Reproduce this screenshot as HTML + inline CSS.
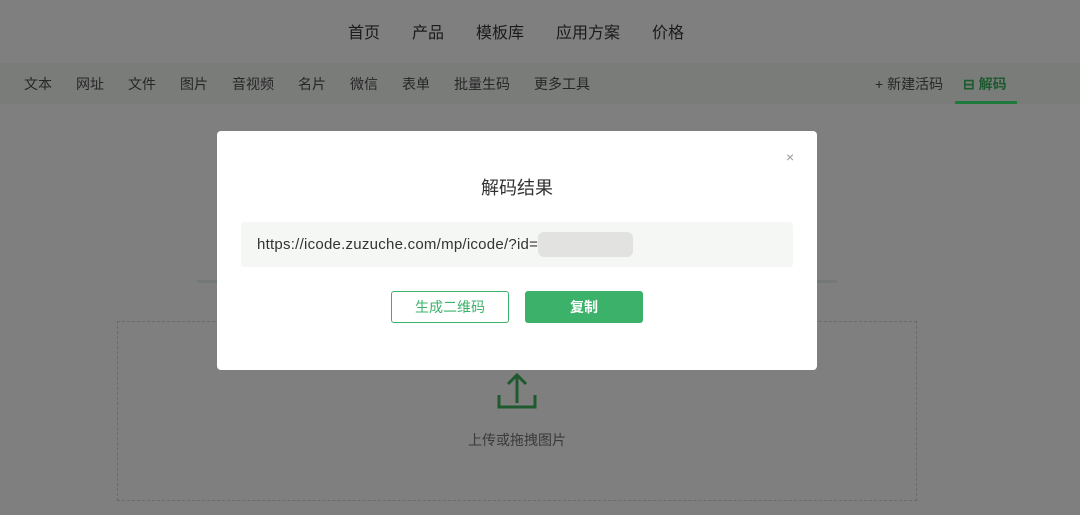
<!DOCTYPE html>
<html><head><meta charset="utf-8"><style>
*{margin:0;padding:0;box-sizing:border-box}
body{width:1080px;height:515px;overflow:hidden;background:#7f7f7f;font-family:"Liberation Sans","Noto Sans CJK SC",sans-serif;position:relative}
.a{position:absolute;white-space:nowrap}
.top{font-size:16px;color:#1a1a1a;top:19px}
.bar{position:absolute;left:0;top:63px;width:1080px;height:41px;background:#7a7c7a}
.tab{font-size:14px;color:#262626;top:74px}
</style></head><body>
<div class="a top" style="left:348px">首页</div>
<div class="a top" style="left:412px">产品</div>
<div class="a top" style="left:476px">模板库</div>
<div class="a top" style="left:556px">应用方案</div>
<div class="a top" style="left:652px">价格</div>
<div class="bar"></div>
<div class="a tab" style="left:24px">文本</div>
<div class="a tab" style="left:76px">网址</div>
<div class="a tab" style="left:128px">文件</div>
<div class="a tab" style="left:180px">图片</div>
<div class="a tab" style="left:232px">音视频</div>
<div class="a tab" style="left:298px">名片</div>
<div class="a tab" style="left:350px">微信</div>
<div class="a tab" style="left:402px">表单</div>
<div class="a tab" style="left:454px">批量生码</div>
<div class="a tab" style="left:534px">更多工具</div>
<div class="a tab" style="left:875px">+ 新建活码</div>
<div class="a tab" style="left:963px;color:#1d5a30;font-weight:bold">⊟ 解码</div>
<div class="a" style="left:955px;top:101px;width:62px;height:3px;background:#1d7a3c"></div>
<div class="a" style="left:197px;top:280px;width:640px;height:3px;background:#747876"></div>
<div class="a" style="left:117px;top:321px;width:800px;height:180px;border:1px dashed #6a6a6a"></div>
<svg class="a" style="left:497px;top:373px" width="40" height="36" viewBox="0 0 40 36"><path d="M20 2V30M11 11L20 2L29 11M2 22V34H38V22" fill="none" stroke="#1f5a2e" stroke-width="3"/></svg>
<div class="a" style="left:468px;top:430px;font-size:14px;color:#3a3a3a">上传或拖拽图片</div>
<div class="a" style="left:217px;top:131px;width:600px;height:239px;background:#fff;border-radius:4px">
<div class="a" style="left:569px;top:18px;font-size:14px;color:#999">×</div>
<div class="a" style="left:0;width:600px;text-align:center;top:43px;font-size:18px;color:#333">解码结果</div>
<div class="a" style="left:24px;top:91px;width:552px;height:45px;background:#f5f7f5;border-radius:3px"></div>
<div class="a" style="left:40px;top:105px;font-size:15px;letter-spacing:0.25px;color:#333">https://icode.zuzuche.com/mp/icode/?id=</div>
<div class="a" style="left:321px;top:101px;width:95px;height:25px;background:#e2e2e0;border-radius:6px"></div>
<div class="a" style="left:174px;top:160px;width:118px;height:32px;border:1px solid #3cb16a;border-radius:3px;color:#3cb16a;font-size:14px;text-align:center;line-height:30px">生成二维码</div>
<div class="a" style="left:308px;top:160px;width:118px;height:32px;background:#3cb16a;border-radius:3px;color:#fff;font-size:14px;font-weight:bold;text-align:center;line-height:32px">复制</div>
</div>
</body></html>
